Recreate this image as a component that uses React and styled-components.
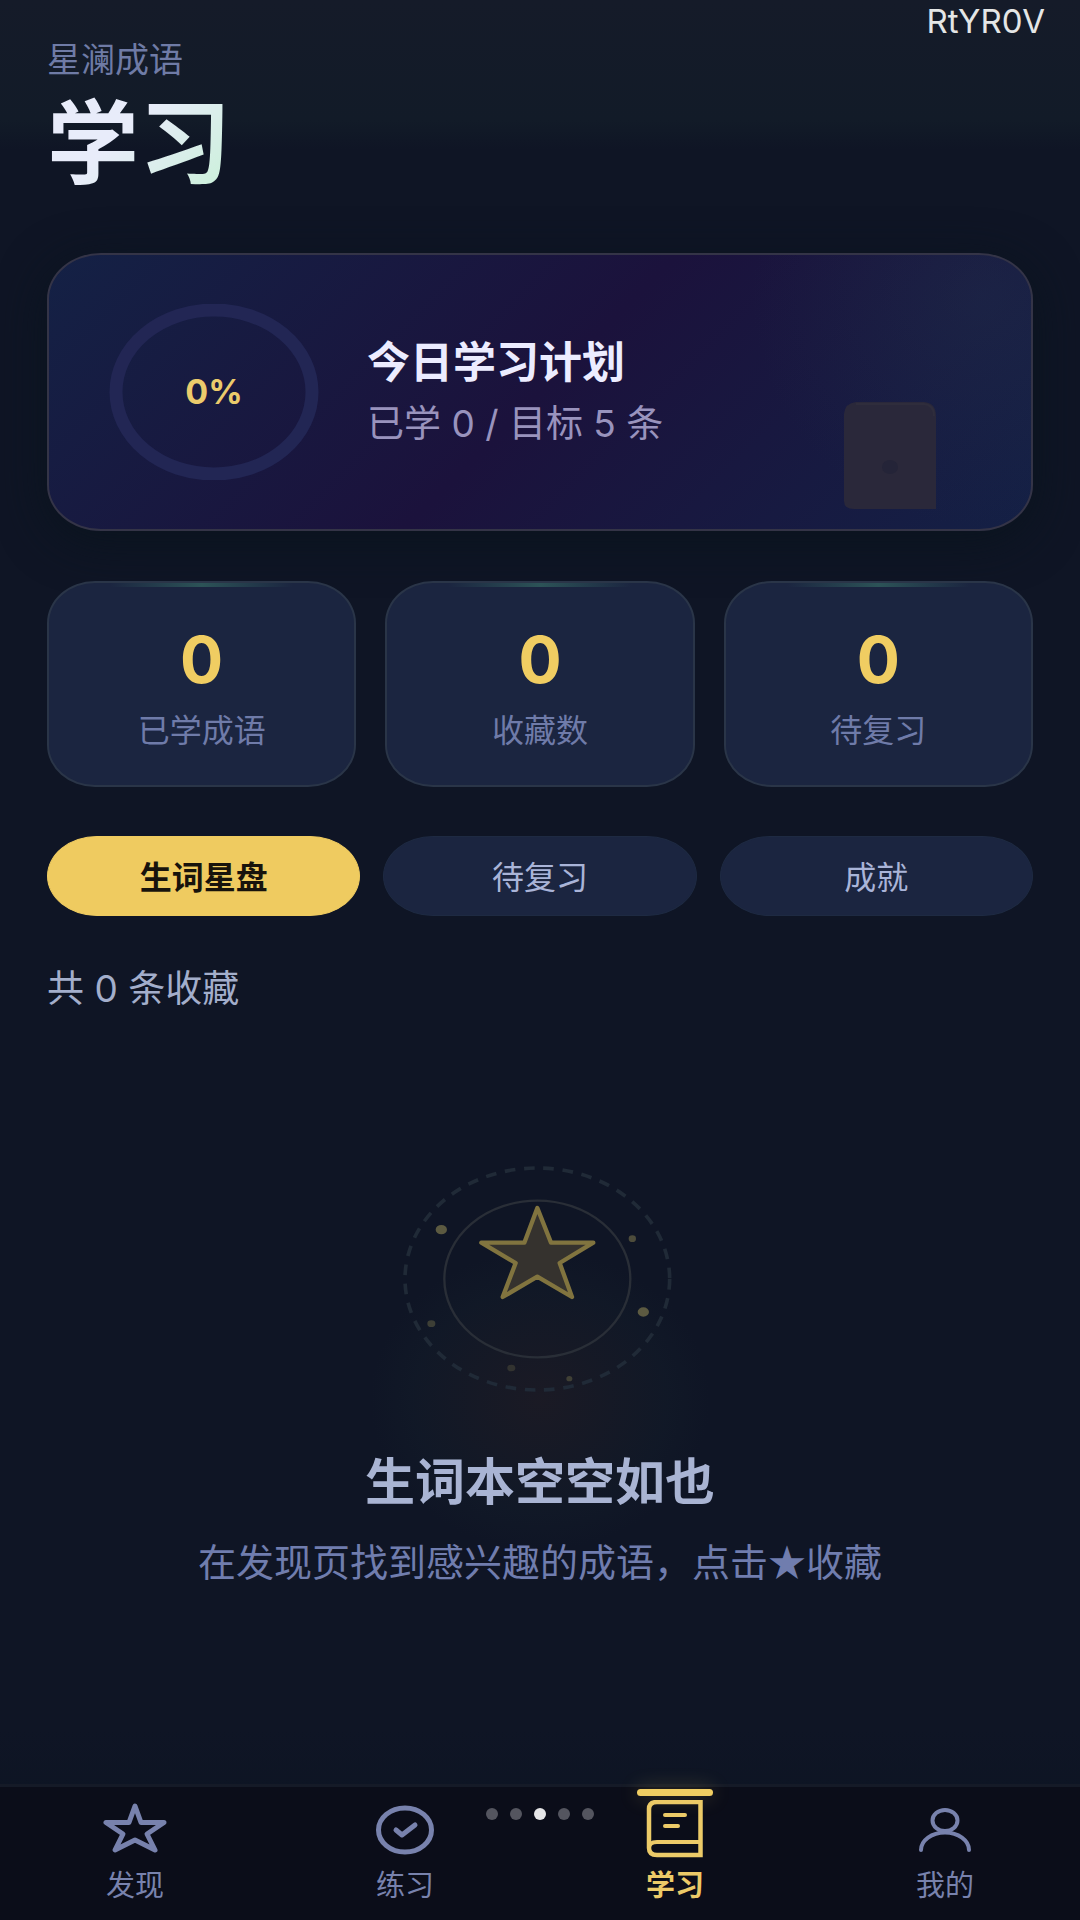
import React, { useState } from 'react';

import styled, { createGlobalStyle, css } from 'styled-components';

const GlobalStyle = createGlobalStyle`
    * {
        box-sizing: border-box;
    }

    body {
        margin: 0;
        background: #0f1525;
        font-family: Inter, "Noto Sans CJK SC", sans-serif;
    }

    h1, h2, p, dl, dt, dd {
        margin: 0;
    }
`;

const Page = styled.div`
    position: relative;
    display: flex;
    flex-direction: column;
    min-height: 100vh;
    background: linear-gradient(180deg, #151b29 0, #121b28 120px, #0f1525 150px, #0f1525 90%, #0b1421 100%);
`;

const Content = styled.main`
    flex: 1;
    padding: 36px 47px 48px;
`;

const DeviceTag = styled.span`
    position: absolute;
    top: 0;
    right: 35px;
    font-size: 33px;
    line-height: 42px;
    color: #e4e6e6;
`;

const Brand = styled.p`
    font-size: 34px;
    line-height: 48px;
    color: #6f7ba6;
`;

const Title = styled.h1`
    width: max-content;
    margin-top: 4px;
    font-size: 92px;
    font-weight: 700;
    line-height: 112px;
    color: transparent;
    background: linear-gradient(135deg, #e8ecfa 40%, #cdf0dc 90%);
    background-clip: text;
`;

const PlanCard = styled.section`
    position: relative;
    display: flex;
    align-items: center;
    gap: 48px;
    margin-top: 53px;
    padding: 49px 60px;
    border: 2px solid #343447;
    border-radius: 54px / 46px;
    background:
        radial-gradient(circle at 95% 15%, rgba(40, 60, 80, 0.25), transparent 24%),
        linear-gradient(135deg, #142145 0%, #1b123c 50%, #142045 100%);
    box-shadow: 0 10px 48px #0a141e;
`;

const Ring = styled.div`
    position: relative;
    display: grid;
    place-items: center;
    width: 210px;
    height: 176px;
    font-size: 34px;
    font-weight: 700;
    line-height: 40px;
    color: #ebcb6c;

    svg {
        position: absolute;
        inset: 0;
    }
`;

const PlanTitle = styled.h2`
    font-size: 43px;
    font-weight: 700;
    line-height: 56px;
    color: #ececff;
`;

const PlanText = styled.p`
    margin-top: 8px;
    font-size: 37px;
    line-height: 52px;
    color: #9993bd;
`;

const BookMark = styled.svg`
    position: absolute;
    right: 95px;
    bottom: 20px;
`;

const Stats = styled.dl`
    display: grid;
    grid-template-columns: repeat(3, 1fr);
    gap: 29px;
    margin-top: 50px;
`;

const Stat = styled.div`
    position: relative;
    display: flex;
    flex-direction: column-reverse;
    gap: 13px;
    overflow: hidden;
    padding: 41px 16px 32px;
    border: 2px solid #2a3548;
    border-radius: 48px / 42px;
    background: #1b2540;
    text-align: center;

    &::before {
        content: "";
        position: absolute;
        top: -1px;
        left: 0;
        right: 0;
        height: 5px;
        background: linear-gradient(90deg, transparent 20%, #2c5357 50%, transparent 80%);
    }
`;

const StatLabel = styled.dt`
    font-size: 32px;
    line-height: 44px;
    color: #6f7ba9;
`;

const StatValue = styled.dd`
    font-size: 64px;
    font-weight: 700;
    line-height: 72px;
    color: #f0cd62;
`;

const Tabs = styled.div`
    display: grid;
    grid-template-columns: repeat(3, 1fr);
    gap: 23px;
    margin-top: 49px;
`;

const Tab = styled.button`
    height: 80px;
    padding: 0 16px 2px;
    border: 1px solid #1e2a42;
    border-radius: 50px / 40px;
    background: #1b2540;
    font-family: inherit;
    font-size: 32px;
    color: #a9b4d8;
    cursor: pointer;

    ${props => props.$active && css`
        border-color: #efcb60;
        background: #efcb60;
        font-weight: 600;
        color: #17130c;
    `}
`;

const Count = styled.p`
    margin-top: 49px;
    font-size: 37px;
    line-height: 48px;
    color: #a3aecb;
`;

const Empty = styled.section`
    display: flex;
    flex-direction: column;
    align-items: center;
    margin-top: 117px;
    background: radial-gradient(ellipse 170px 150px at 50% 270px, rgba(36, 30, 36, 0.55), rgba(20, 30, 42, 0.35) 75%, transparent 100%);
    text-align: center;
`;

const EmptyTitle = styled.h2`
    margin-top: 30px;
    font-size: 50px;
    font-weight: 600;
    line-height: 64px;
    color: #a9b4d3;
`;

const EmptyText = styled.p`
    margin-top: 20px;
    font-family: "Noto Sans CJK SC", sans-serif;
    font-size: 38px;
    line-height: 52px;
    color: #707dae;
`;

const NavBar = styled.nav`
    position: relative;
    display: grid;
    grid-template-columns: repeat(4, 1fr);
    border-top: 3px solid #151a27;
    background: #0b0d19;
`;

const NavLink = styled.a`
    position: relative;
    display: flex;
    flex-direction: column;
    align-items: center;
    gap: 4px;
    padding: 13px 0 12px;
    font-size: 29px;
    line-height: 44px;
    color: #7882ad;
    text-decoration: none;

    ${props => props.$active && css`
        font-weight: 700;
        color: #ecca68;

        &::before {
            content: "";
            position: absolute;
            top: 2px;
            width: 76px;
            height: 7px;
            border-radius: 4px;
            background: #f0cd62;
            box-shadow: 0 0 20px rgba(240, 205, 98, 0.3);
        }
    `}
`;

const Pager = styled.div`
    position: absolute;
    top: 21px;
    left: 50%;
    display: flex;
    gap: 12px;
    transform: translateX(-50%);
`;

const PagerDot = styled.span`
    width: 12px;
    height: 12px;
    border-radius: 50%;
    background: ${props => (props.$active ? '#e6e6e8' : '#54555f')};
`;

const NavIcon = ({ children }) => (
    <svg
        width="72"
        height="60"
        viewBox="0 0 72 60"
        fill="none"
        stroke="currentColor"
        strokeWidth="5"
        strokeLinecap="round"
        strokeLinejoin="round"
        aria-hidden="true"
    >
        {children}
    </svg>
);

const EmptyStar = () => (
    <svg width="360" height="290" viewBox="0 0 1080 870" fill="none" aria-hidden="true">
        <ellipse cx="532" cy="447" rx="397" ry="333" stroke="#202a37" strokeWidth="11" strokeDasharray="32 26" />
        <ellipse cx="532" cy="447" rx="279" ry="235" stroke="#292e37" strokeWidth="7" />
        <path
            d="M532 234 L573 338 L700 338 L599 399 L636 501 L532 440 L428 501 L467 399 L364 338 L493 338 Z"
            fill="#35322e"
            stroke="#81743f"
            strokeWidth="13"
            strokeLinejoin="round"
        />
        <g fill="#5c5a41">
            <ellipse cx="244" cy="299" rx="17" ry="14" />
            <ellipse cx="850" cy="546" rx="17" ry="14" />
            <ellipse cx="817" cy="326" rx="11" ry="10" opacity="0.8" />
            <ellipse cx="214" cy="581" rx="12" ry="10" opacity="0.6" />
            <ellipse cx="454" cy="714" rx="12" ry="10" opacity="0.4" />
            <ellipse cx="628" cy="746" rx="9" ry="8" opacity="0.6" />
        </g>
    </svg>
);

const stats = ['已学成语', '收藏数', '待复习'];
const tabs = ['生词星盘', '待复习', '成就'];

const navItems = [
    {
        label: '发现',
        icon: <path d="M36 6 L42 22.5 L65 22.5 L48 34 L56 50 L36 40 L16 50 L24 34 L7 22.5 L30 22.5 Z" />,
    },
    {
        label: '练习',
        icon: (
            <>
                <ellipse cx="36" cy="30" rx="26.5" ry="22" />
                <path d="M27 30 L33 35 L46 25" />
            </>
        ),
    },
    {
        label: '学习',
        active: true,
        icon: (
            <>
                <path d="M61.5 2 H18 Q10 2 10 9 V48 Q10 55 18 55 H61.5 Z" strokeLinejoin="miter" strokeWidth="4.5" />
                <path d="M10 48 Q10 42 18 42 H61" strokeWidth="4" />
                <path d="M26 15 H46 M26 26 H39" strokeWidth="4" />
            </>
        ),
    },
    {
        label: '我的',
        icon: (
            <g strokeWidth="4">
                <ellipse cx="36" cy="20.5" rx="12.5" ry="10.5" />
                <path d="M12 50 A24 17.5 0 0 1 60 50" />
            </g>
        ),
    },
];

const App = () => {
    const [tab, setTab] = useState(0);

    return (
        <Page>
            <GlobalStyle />
            <DeviceTag>RtYR0V</DeviceTag>
            <Content>
                <Brand>星澜成语</Brand>
                <Title>学习</Title>

                <PlanCard>
                    <Ring>
                        <svg width="210" height="176" viewBox="0 0 210 176" fill="none" aria-hidden="true">
                            <ellipse cx="105" cy="88" rx="98" ry="82" stroke="#222654" strokeWidth="13" />
                        </svg>
                        <span>0%</span>
                    </Ring>
                    <div>
                        <PlanTitle>今日学习计划</PlanTitle>
                        <PlanText>已学 0 / 目标 5 条</PlanText>
                    </div>
                    <BookMark width="92" height="107" viewBox="0 0 92 107" aria-hidden="true">
                        <path d="M12 0 H80 Q92 1 92 14 V107 H10 Q0 107 0 99 V12 Q1 1 12 0 Z" fill="#2a283a" />
                        <path d="M12 2 H80 Q90 3 90 14" fill="none" stroke="#2f2d3c" strokeWidth="2" />
                        <ellipse cx="46" cy="65" rx="8" ry="7" fill="#242438" />
                    </BookMark>
                </PlanCard>

                <Stats>
                    {stats.map(label => (
                        <Stat key={label}>
                            <StatLabel>{label}</StatLabel>
                            <StatValue>0</StatValue>
                        </Stat>
                    ))}
                </Stats>

                <Tabs>
                    {tabs.map((label, i) => (
                        <Tab key={label} type="button" $active={i === tab} aria-pressed={i === tab} onClick={() => setTab(i)}>
                            {label}
                        </Tab>
                    ))}
                </Tabs>

                <Count>共 0 条收藏</Count>

                <Empty>
                    <EmptyStar />
                    <EmptyTitle>生词本空空如也</EmptyTitle>
                    <EmptyText>在发现页找到感兴趣的成语，点击★收藏</EmptyText>
                </Empty>
            </Content>

            <NavBar>
                {navItems.map(item => (
                    <NavLink key={item.label} href="#" $active={item.active} aria-current={item.active ? 'page' : undefined}>
                        <NavIcon>{item.icon}</NavIcon>
                        {item.label}
                    </NavLink>
                ))}
                <Pager>
                    {[0, 1, 2, 3, 4].map(i => (
                        <PagerDot key={i} $active={i === 2} />
                    ))}
                </Pager>
            </NavBar>
        </Page>
    );
};

export default App;
